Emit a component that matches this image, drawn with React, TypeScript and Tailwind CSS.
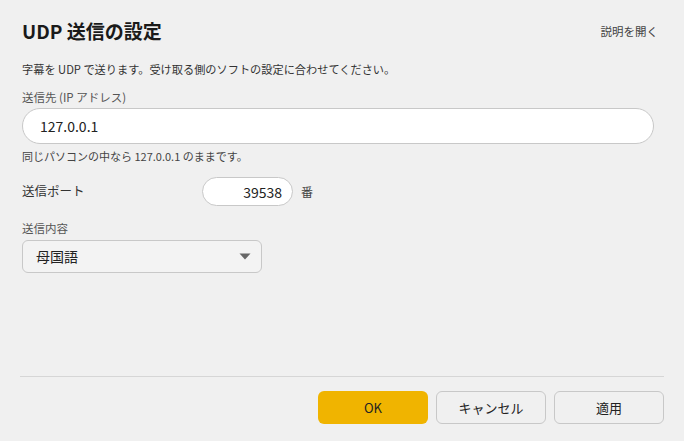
export default function App() {
  return (
    <div
      className="flex h-[441px] w-[684px] flex-col bg-[#f0f0f0] text-[#1f1f1f]"
      style={{ fontFamily: '"Noto Sans CJK JP", "Noto Sans", sans-serif' }}
    >
      <div className="flex flex-col pl-[22px] pr-[30px] pt-[18px]">
        <div className="flex items-center justify-between">
          <h1 className="text-[19px] font-bold leading-[26px] text-[#1a1a1a]">UDP 送信の設定</h1>
          <button type="button" className="-mr-[4px] text-[11.5px] leading-[18px] text-[#444]">
            説明を開く
          </button>
        </div>

        <p className="mt-[16px] text-[11.2px] leading-[18px] text-[#333]">
          字幕を UDP で送ります。受け取る側のソフトの設定に合わせてください。
        </p>

        <label className="mt-[10px] text-[11.5px] leading-[18px] text-[#555]">送信先 (IP アドレス)</label>
        <input
          readOnly
          value="127.0.0.1"
          className="mt-[2px] h-[36px] w-full rounded-full border border-[#c8c8c8] bg-white px-[17px] text-[14px] text-[#222] outline-none"
        />
        <p className="mt-[3px] text-[11px] leading-[18px] text-[#444]">同じパソコンの中なら 127.0.0.1 のままです。</p>

        <div className="mt-[12px] flex items-center">
          <span className="w-[180px] text-[12.5px] text-[#333]">送信ポート</span>
          <input
            readOnly
            value="39538"
            className="h-[29px] w-[91px] rounded-full border border-[#c8c8c8] bg-white px-[10px] text-right text-[14px] text-[#222] outline-none"
          />
          <span className="ml-[8px] text-[12px] text-[#444]">番</span>
        </div>

        <label className="mt-[13px] text-[11.5px] leading-[18px] text-[#555]">送信内容</label>
        <div className="mt-[3px] flex h-[33px] w-[240px] items-center justify-between rounded-[6px] border border-[#c8c8c8] bg-[#f3f3f3] pl-[13px] pr-[10px]">
          <span className="text-[14px] text-[#222]">母国語</span>
          <svg width="12" height="7" viewBox="0 0 12 7">
            <path d="M0.5 0.5 H11.5 L6 6.5 Z" fill="#666" />
          </svg>
        </div>
      </div>

      <div className="flex-1" />

      <div className="ml-[20px] mr-[20px] flex flex-col pb-[17px]">
        <div className="h-px bg-[#d6d6d6]" />
        <div className="mt-[14px] flex justify-end gap-[8px]">
          <button
            type="button"
            className="h-[33px] w-[110px] rounded-[6px] bg-[#f0b400] text-[13px] text-[#222]"
          >
            OK
          </button>
          <button
            type="button"
            className="h-[33px] w-[110px] rounded-[6px] border border-[#c8c8c8] bg-[#f0f0f0] text-[13px] text-[#222]"
          >
            キャンセル
          </button>
          <button
            type="button"
            className="h-[33px] w-[110px] rounded-[6px] border border-[#c8c8c8] bg-[#f0f0f0] text-[13px] text-[#222]"
          >
            適用
          </button>
        </div>
      </div>
    </div>
  );
}
